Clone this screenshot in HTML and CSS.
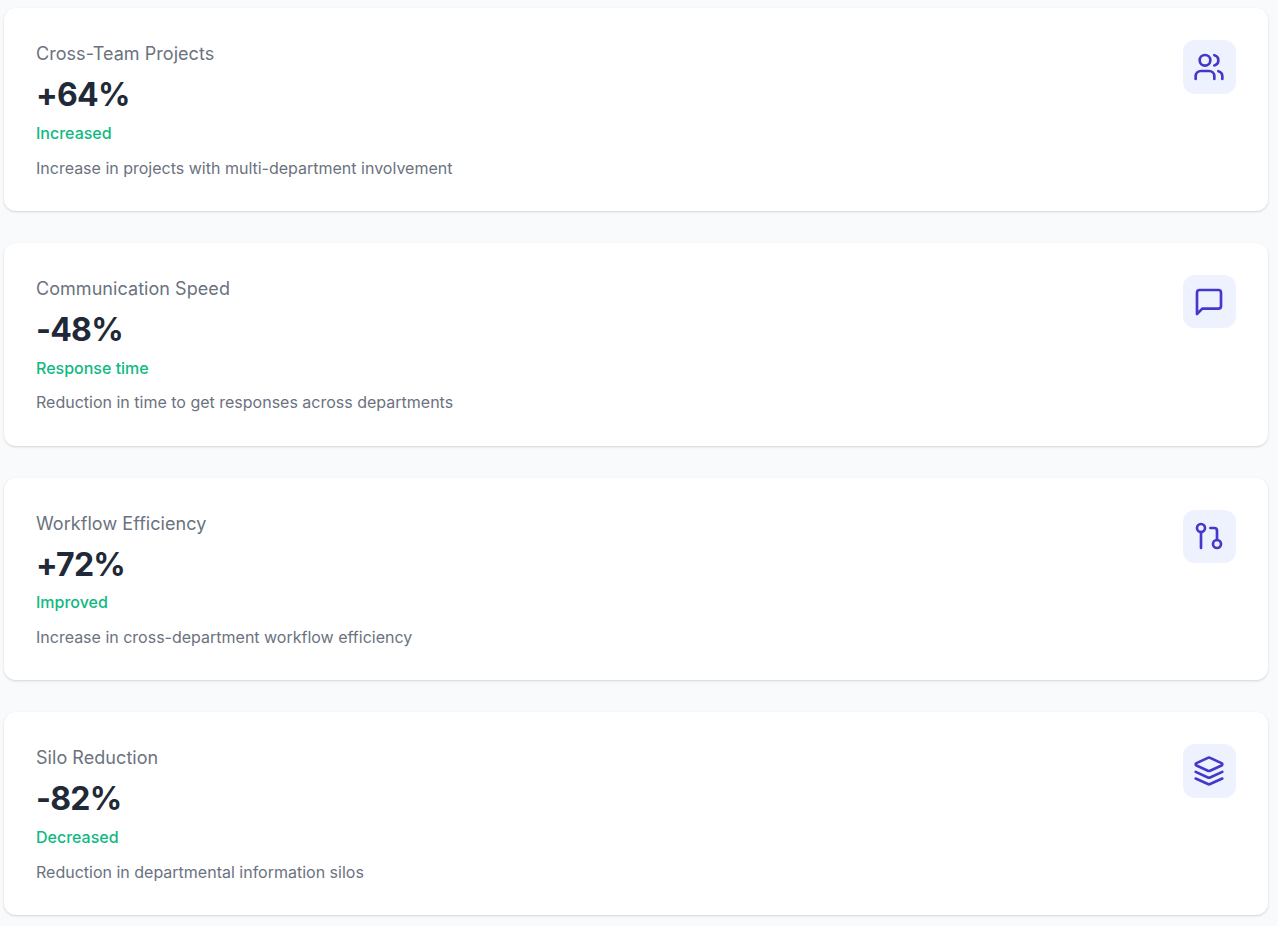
FILE: index.html
```html
<!DOCTYPE html>
<html lang="en">
<head>
<meta charset="utf-8">
<title>Metrics</title>
<link rel="stylesheet" href="styles.css">
</head>
<body>
<main class="list">
  <section class="card">
    <div class="body">
      <h3 class="title">Cross-Team Projects</h3>
      <div class="value">+64%</div>
      <div class="status">Increased</div>
      <p class="desc">Increase in projects with multi-department involvement</p>
    </div>
    <div class="tile">
      <svg class="icon" viewBox="0 0 24 24"><path d="M16 21v-2a4 4 0 0 0-4-4H6a4 4 0 0 0-4 4v2"/><circle cx="9" cy="7" r="4"/><path d="M22 21v-2a4 4 0 0 0-3-3.87"/><path d="M16 3.13a4 4 0 0 1 0 7.75"/></svg>
    </div>
  </section>
  <section class="card">
    <div class="body">
      <h3 class="title">Communication Speed</h3>
      <div class="value">-48%</div>
      <div class="status">Response time</div>
      <p class="desc">Reduction in time to get responses across departments</p>
    </div>
    <div class="tile">
      <svg class="icon" viewBox="0 0 24 24"><path d="M21 15a2 2 0 0 1-2 2H7l-4 4V5a2 2 0 0 1 2-2h14a2 2 0 0 1 2 2z"/></svg>
    </div>
  </section>
  <section class="card">
    <div class="body">
      <h3 class="title">Workflow Efficiency</h3>
      <div class="value">+72%</div>
      <div class="status">Improved</div>
      <p class="desc">Increase in cross-department workflow efficiency</p>
    </div>
    <div class="tile">
      <svg class="icon" viewBox="0 0 24 24"><circle cx="18" cy="18" r="3"/><circle cx="6" cy="6" r="3"/><path d="M13 6h3a2 2 0 0 1 2 2v7"/><path d="M6 9v12"/></svg>
    </div>
  </section>
  <section class="card">
    <div class="body">
      <h3 class="title">Silo Reduction</h3>
      <div class="value">-82%</div>
      <div class="status">Decreased</div>
      <p class="desc">Reduction in departmental information silos</p>
    </div>
    <div class="tile">
      <svg class="icon" viewBox="0 0 24 24"><path d="M12.83 2.18a2 2 0 0 0-1.66 0L2.6 6.08a1 1 0 0 0 0 1.83l8.58 3.91a2 2 0 0 0 1.66 0l8.58-3.9a1 1 0 0 0 0-1.83Z"/><path d="M22 17.65l-9.17 4.16a2 2 0 0 1-1.66 0L2 17.65"/><path d="M22 12.65l-9.17 4.16a2 2 0 0 1-1.66 0L2 12.65"/></svg>
    </div>
  </section>
</main>
</body>
</html>
```
FILE: styles.css
```css
* { box-sizing: border-box; }
html, body { margin: 0; padding: 0; }
body {
  background: #f9fafb;
  font-family: Inter, "Liberation Sans", sans-serif;
  height: 926px;
  overflow: hidden;
}
.list {
  display: flex;
  flex-direction: column;
  gap: 32px;
  padding: 8.3px 10px 0 4px;
}
.card {
  display: flex;
  justify-content: space-between;
  align-items: flex-start;
  padding: 32px;
  background: #fff;
  border-radius: 12px;
  box-shadow: 0 1px 3px rgba(0, 0, 0, 0.1), 0 1px 2px rgba(0, 0, 0, 0.06);
}
.title {
  margin: 0 0 8px;
  font-size: 18px;
  line-height: 27px;
  font-weight: 400;
  letter-spacing: 0.05px;
  color: #6b7280;
}
.value {
  margin-bottom: 7px;
  font-size: 32px;
  line-height: 39.67px;
  font-weight: 700;
  letter-spacing: -0.75px;
  color: #1f2937;
}
.status {
  margin-bottom: 13.8px;
  font-size: 16px;
  line-height: 22px;
  font-weight: 500;
  color: #10b981;
}
.desc {
  margin: 0;
  font-size: 16px;
  line-height: 21.2px;
  color: #6b7280;
}
.tile {
  display: flex;
  align-items: center;
  justify-content: center;
  width: 53.33px;
  height: 53.33px;
  border-radius: 12px;
  background: #eef2ff;
}
.icon {
  width: 32px;
  height: 32px;
  fill: none;
  stroke: #4338ca;
  stroke-width: 2;
  stroke-linecap: round;
  stroke-linejoin: round;
}
```
